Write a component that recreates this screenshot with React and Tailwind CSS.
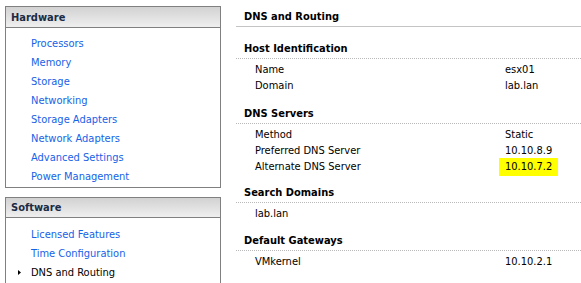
export default function App() {
  const hw = ["Processors","Memory","Storage","Networking","Storage Adapters","Network Adapters","Advanced Settings","Power Management"];
  const sw = ["Licensed Features","Time Configuration"];
  const font = { fontFamily: '"DejaVu Sans Condensed","DejaVu Sans",sans-serif' };
  const Row = ({ label, value, hl }) => (
    <div className="flex h-[16px] leading-[16px] pl-[19px]">
      <div className="w-[250px] shrink-0">{label}</div>
      {hl ? (
        <div className="bg-[#ffff00] -ml-[6px] px-[6px] h-[18px] -mt-[1px] pt-[1px]">{value}</div>
      ) : (
        <div>{value}</div>
      )}
    </div>
  );
  const Header = ({ title, className = "" }) => (
    <div className={"pl-[8px] leading-[14px] pb-[2px] font-bold border-b border-dotted border-[#b8b8b8] mb-[3px] " + className}>{title}</div>
  );
  return (
    <div className="w-[581px] h-[283px] bg-white overflow-hidden flex text-[11px] text-black" style={font}>
      <div className="w-[216px] ml-[5px] pt-[6px] flex flex-col gap-[9px] shrink-0">
        <div className="border border-[#808080]">
          <div className="h-[21px] bg-gradient-to-b from-[#d2d2d2] to-[#efefef] border-b border-[#808080] pl-[5px] leading-[21px] font-bold text-[#1b2b45]">Hardware</div>
          <div className="pt-[6px] pb-[1px]">
            {hw.map((t) => (
              <div key={t} className="h-[19px] leading-[19px] pl-[25px] text-[#1562e8]">{t}</div>
            ))}
          </div>
        </div>
        <div className="border border-[#808080] border-b-0 flex-1">
          <div className="h-[20px] bg-gradient-to-b from-[#d2d2d2] to-[#efefef] border-b border-[#808080] pl-[5px] leading-[20px] font-bold text-[#1b2b45]">Software</div>
          <div className="pt-[7px]">
            {sw.map((t) => (
              <div key={t} className="h-[19px] leading-[19px] pl-[25px] text-[#1562e8]">{t}</div>
            ))}
            <div className="h-[19px] leading-[19px] pl-[11px] flex items-center">
              <svg width="14" height="19" viewBox="0 0 14 19" className="shrink-0">
                <path d="M1 7 L4 9.5 L1 12 Z" fill="#000" />
              </svg>
              <span>DNS and Routing</span>
            </div>
          </div>
        </div>
      </div>
      <div className="ml-[15px] flex-1 flex flex-col">
        <div className="h-[27px] border-b border-[#c4c4c4] pl-[8px] pt-[10px] leading-[14px] font-bold">DNS and Routing</div>
        <Header title="Host Identification" className="mt-[15px]" />
        <Row label="Name" value="esx01" />
        <Row label="Domain" value="lab.lan" />
        <Header title="DNS Servers" className="mt-[13px]" />
        <Row label="Method" value="Static" />
        <Row label="Preferred DNS Server" value="10.10.8.9" />
        <Row label="Alternate DNS Server" value="10.10.7.2" hl />
        <Header title="Search Domains" className="mt-[11px]" />
        <Row label="lab.lan" value="" />
        <Header title="Default Gateways" className="mt-[12px]" />
        <Row label="VMkernel" value="10.10.2.1" />
      </div>
    </div>
  );
}
